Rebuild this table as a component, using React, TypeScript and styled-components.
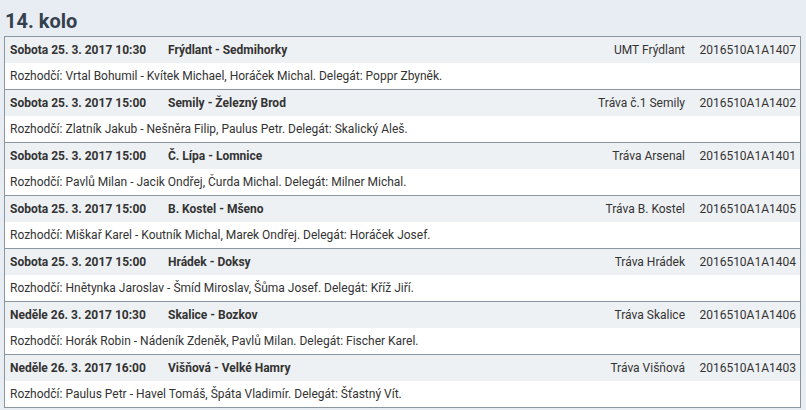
import React from 'react';
import styled, { createGlobalStyle } from 'styled-components';

interface IMatch {
  date: string;
  teams: string;
  venue: string;
  code: string;
  officials: string;
}

const matches: IMatch[] = [
  {
    date: 'Sobota 25. 3. 2017 10:30',
    teams: 'Frýdlant - Sedmihorky',
    venue: 'UMT Frýdlant',
    code: '2016510A1A1407',
    officials: 'Rozhodčí: Vrtal Bohumil - Kvítek Michael, Horáček Michal. Delegát: Poppr Zbyněk.',
  },
  {
    date: 'Sobota 25. 3. 2017 15:00',
    teams: 'Semily - Železný Brod',
    venue: 'Tráva č.1 Semily',
    code: '2016510A1A1402',
    officials: 'Rozhodčí: Zlatník Jakub - Nešněra Filip, Paulus Petr. Delegát: Skalický Aleš.',
  },
  {
    date: 'Sobota 25. 3. 2017 15:00',
    teams: 'Č. Lípa - Lomnice',
    venue: 'Tráva Arsenal',
    code: '2016510A1A1401',
    officials: 'Rozhodčí: Pavlů Milan - Jacik Ondřej, Čurda Michal. Delegát: Milner Michal.',
  },
  {
    date: 'Sobota 25. 3. 2017 15:00',
    teams: 'B. Kostel - Mšeno',
    venue: 'Tráva B. Kostel',
    code: '2016510A1A1405',
    officials: 'Rozhodčí: Miškař Karel - Koutník Michal, Marek Ondřej. Delegát: Horáček Josef.',
  },
  {
    date: 'Sobota 25. 3. 2017 15:00',
    teams: 'Hrádek - Doksy',
    venue: 'Tráva Hrádek',
    code: '2016510A1A1404',
    officials: 'Rozhodčí: Hnětynka Jaroslav - Šmíd Miroslav, Šůma Josef. Delegát: Kříž Jiří.',
  },
  {
    date: 'Neděle 26. 3. 2017 10:30',
    teams: 'Skalice - Bozkov',
    venue: 'Tráva Skalice',
    code: '2016510A1A1406',
    officials: 'Rozhodčí: Horák Robin - Nádeník Zdeněk, Pavlů Milan. Delegát: Fischer Karel.',
  },
  {
    date: 'Neděle 26. 3. 2017 16:00',
    teams: 'Višňová - Velké Hamry',
    venue: 'Tráva Višňová',
    code: '2016510A1A1403',
    officials: 'Rozhodčí: Paulus Petr - Havel Tomáš, Špáta Vladimír. Delegát: Šťastný Vít.',
  },
];

const GlobalStyle = createGlobalStyle`
  html, body {
    margin: 0;
    background: #e8edf3;
  }

  body {
    font-family: Roboto, "Liberation Sans", sans-serif;
    color: #333;
  }
`;

const Page = styled.div`
  padding: 0 5px 0 4px;
`;

const Title = styled.h2`
  margin: 0;
  padding: 9px 0 0 1px;
  height: 36px;
  box-sizing: border-box;
  font-size: 20px;
  font-weight: 700;
  line-height: 24px;
  color: #34404d;
`;

const Table = styled.div`
  border: 1px solid #8c96a1;
  border-bottom: none;
  background: #fff;
`;

const Block = styled.div`
  border-bottom: 1px solid #8c96a1;
`;

const HeaderRow = styled.div`
  display: flex;
  align-items: center;
  height: 26px;
  padding: 0 4px 0 5px;
  background: #eef1f4;
  font-size: 12px;
`;

const DateCell = styled.div`
  width: 158px;
  font-weight: 700;
`;

const TeamsCell = styled.div`
  flex: 1;
  font-weight: 700;
`;

const VenueCell = styled.div`
  text-align: right;
`;

const CodeCell = styled.div`
  width: 111px;
  text-align: right;
`;

const BodyRow = styled.div`
  display: flex;
  align-items: center;
  height: 26px;
  padding: 0 5px;
  font-size: 12px;
`;

export default function App() {
  return (
    <Page>
      <GlobalStyle />
      <Title>14. kolo</Title>
      <Table>
        { matches.map((m) => (
          <Block key={ m.code }>
            <HeaderRow>
              <DateCell>{ m.date }</DateCell>
              <TeamsCell>{ m.teams }</TeamsCell>
              <VenueCell>{ m.venue }</VenueCell>
              <CodeCell>{ m.code }</CodeCell>
            </HeaderRow>
            <BodyRow>{ m.officials }</BodyRow>
          </Block>
        )) }
      </Table>
    </Page>
  );
}
